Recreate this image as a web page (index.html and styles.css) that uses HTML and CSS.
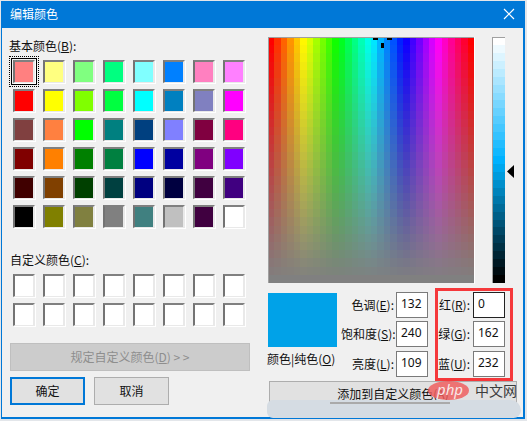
FILE: index.html
```
<!DOCTYPE html>
<html lang="zh">
<head>
<meta charset="utf-8">
<title>编辑颜色</title>
<link rel="stylesheet" href="styles.css">
</head>
<body>
<div class="window">
  <header class="titlebar">
    <span class="title">编辑颜色</span>
    <svg class="close" width="12" height="12" viewBox="0 0 12 12"><path d="M1 1 L11 11 M11 1 L1 11" stroke="#fff" stroke-width="1.2" fill="none"/></svg>
  </header>
  <div class="content">
    <section class="left">
      <div class="label label-basic">基本颜色(<u>B</u>):</div>
      <div class="swatches">
        <i class="swatch selected" style="background:#ff8080"></i><i class="swatch" style="background:#ffff80"></i><i class="swatch" style="background:#80ff80"></i><i class="swatch" style="background:#00ff80"></i><i class="swatch" style="background:#80ffff"></i><i class="swatch" style="background:#0080ff"></i><i class="swatch" style="background:#ff80c0"></i><i class="swatch" style="background:#ff80ff"></i>
        <i class="swatch" style="background:#ff0000"></i><i class="swatch" style="background:#ffff00"></i><i class="swatch" style="background:#80ff00"></i><i class="swatch" style="background:#00ff40"></i><i class="swatch" style="background:#00ffff"></i><i class="swatch" style="background:#0080c0"></i><i class="swatch" style="background:#8080c0"></i><i class="swatch" style="background:#ff00ff"></i>
        <i class="swatch" style="background:#804040"></i><i class="swatch" style="background:#ff8040"></i><i class="swatch" style="background:#00ff00"></i><i class="swatch" style="background:#008080"></i><i class="swatch" style="background:#004080"></i><i class="swatch" style="background:#8080ff"></i><i class="swatch" style="background:#800040"></i><i class="swatch" style="background:#ff0080"></i>
        <i class="swatch" style="background:#800000"></i><i class="swatch" style="background:#ff8000"></i><i class="swatch" style="background:#008000"></i><i class="swatch" style="background:#008040"></i><i class="swatch" style="background:#0000ff"></i><i class="swatch" style="background:#0000a0"></i><i class="swatch" style="background:#800080"></i><i class="swatch" style="background:#8000ff"></i>
        <i class="swatch" style="background:#400000"></i><i class="swatch" style="background:#804000"></i><i class="swatch" style="background:#004000"></i><i class="swatch" style="background:#004040"></i><i class="swatch" style="background:#000080"></i><i class="swatch" style="background:#000040"></i><i class="swatch" style="background:#400040"></i><i class="swatch" style="background:#400080"></i>
        <i class="swatch" style="background:#000000"></i><i class="swatch" style="background:#808000"></i><i class="swatch" style="background:#808040"></i><i class="swatch" style="background:#808080"></i><i class="swatch" style="background:#408080"></i><i class="swatch" style="background:#c0c0c0"></i><i class="swatch" style="background:#400040"></i><i class="swatch" style="background:#ffffff"></i>
      </div>
      <div class="label label-custom">自定义颜色(<u>C</u>):</div>
      <div class="swatches">
        <i class="swatch"></i><i class="swatch"></i><i class="swatch"></i><i class="swatch"></i><i class="swatch"></i><i class="swatch"></i><i class="swatch"></i><i class="swatch"></i>
        <i class="swatch"></i><i class="swatch"></i><i class="swatch"></i><i class="swatch"></i><i class="swatch"></i><i class="swatch"></i><i class="swatch"></i><i class="swatch"></i>
      </div>
      <div class="btn btn-define">规定自定义颜色(<u>D</u>)&nbsp;&gt;&nbsp;&gt;</div>
      <div class="actions">
        <div class="btn btn-ok">确定</div>
        <div class="btn btn-cancel">取消</div>
      </div>
    </section>
    <section class="right">
      <div class="pickers">
        <div class="spectrum">
          <canvas id="spectrum" width="206" height="246"></canvas>
          <b class="cross cross-l"></b><b class="cross cross-r"></b><b class="cross cross-v"></b>
        </div>
        <div class="lumbar"><canvas id="lum" width="13" height="246"></canvas></div>
        <svg class="arrow" width="8" height="13" viewBox="0 0 8 13"><path d="M0 6.5 L7 0 V13 Z" fill="#000"/></svg>
      </div>
      <div class="values">
        <div class="preview-col">
          <div class="preview"></div>
          <div class="preview-label">颜色|纯色(<u>O</u>)</div>
        </div>
        <div class="fields">
          <span class="flabel">色调(<u>E</u>):</span><span class="field">132</span><span class="flabel flabel-rgb">红(<u>R</u>):</span><span class="field field-active">0</span>
          <span class="flabel">饱和度(<u>S</u>):</span><span class="field">240</span><span class="flabel flabel-rgb">绿(<u>G</u>):</span><span class="field">162</span>
          <span class="flabel">亮度(<u>L</u>):</span><span class="field">109</span><span class="flabel flabel-rgb">蓝(<u>U</u>):</span><span class="field">232</span>
          <div class="highlight"></div>
        </div>
      </div>
      <div class="btn btn-add">添加到自定义颜色(<u>A</u>)</div>
    </section>
  </div>
</div>
<div class="veil"></div>
<div class="veil-line"></div>
<div class="watermark">
  <svg width="41" height="19" viewBox="0 0 41 19"><ellipse class="php-bg" cx="20.5" cy="9.5" rx="20.5" ry="9.5"/><text x="22" y="13.5" text-anchor="middle" class="php">php</text></svg>
  <span class="wm-text">中文网</span>
</div>
<script src="app.js"></script>
</body>
</html>
```
FILE: styles.css
```
* { box-sizing: border-box; }
html, body { margin: 0; padding: 0; }
body {
  width: 527px; height: 421px; overflow: hidden; position: relative;
  background: #e3e6ea;
  font-family: "Noto Sans CJK SC", "Noto Sans", sans-serif;
  font-size: 12px; color: #111;
  padding: 1px 0 0 1px;
}
.window {
  width: 524px; height: 418px;
  border: 1px solid #0078d7; border-bottom-width: 2px; border-right-width: 2px;
  background: #f0f0f0;
  display: flex; flex-direction: column;
}
.titlebar {
  height: 26px; flex: none; background: #0078d7; color: #fff;
  display: flex; align-items: center; justify-content: space-between;
  padding: 0 8px 3px 8px;
}
.title { font-size: 12px; line-height: 16px; }
.content { display: flex; flex: 1; padding-left: 8px; }
.left { width: 258px; flex: none; display: flex; flex-direction: column; }
.label { font-size: 12px; line-height: 16px; height: 16px; }
.label-basic { margin-top: 10px; margin-left: -1px; }
.label-custom { margin-top: 24px; margin-left: 0; }
u { text-underline-offset: 1px; }
.swatches {
  margin-top: 6px; margin-left: 3px;
  display: grid; grid-template-columns: repeat(8, 22px); column-gap: 8px;
  grid-auto-rows: 23px; row-gap: 6px;
}
.swatch {
  display: block; position: relative; background: #fff;
  border-style: solid; border-width: 2px 2px 1px 2px;
  border-color: #808080 #e9e9e9 #e9e9e9 #737373;
  box-shadow: 1px 1px 0 #fff;
}
.selected::before {
  content: ""; position: absolute; left: -4px; top: -4px; right: -4px; bottom: -3px;
  border: 1px solid #000;
}
.selected::after {
  content: ""; position: absolute; left: -6px; top: -6px; right: -6px; bottom: -5px;
  border: 1.5px dotted #000;
}
.btn {
  display: flex; align-items: center; justify-content: center;
  font-size: 12px; line-height: 16px; background: #e1e1e1; color: #111;
}
.btn-define {
  width: 240px; height: 28px; margin-top: 17px;
  background: #cccccc; color: #8e8e8e; border: 1px solid #bfbfbf;
}
.actions { display: flex; gap: 9px; margin-top: 6px; }
.btn-ok, .btn-cancel { width: 75px; height: 28px; }
.btn-ok { border: 2px solid #0078d7; }
.btn-cancel { border: 1px solid #adadad; }
.right { width: 254px; flex: none; margin-left: 0; padding-top: 9px; }
.pickers { display: flex; align-items: flex-start; height: 246px; }
.spectrum { position: relative; width: 207px; height: 247px; border-right: 1px solid #fff; }
canvas { display: block; }
.cross { position: absolute; background: #000; }
.cross-l { left: 105px; top: 1px; width: 5px; height: 2px; }
.cross-r { left: 119px; top: 1px; width: 5px; height: 2px; }
.cross-v { left: 113px; top: 6px; width: 3px; height: 5px; }
.lumbar { margin-left: 17px; width: 13px; height: 246px; }
.arrow { margin-left: 2px; margin-top: 128px; flex: none; }
.values { display: flex; margin-top: 9px; }
.preview-col { width: 69px; flex: none; }
.preview { height: 54px; width: 69px; margin-top: 1px; background: #00a2e8; }
.preview-label { font-size: 12px; line-height: 16px; margin-top: 4px; margin-left: -1px; white-space: nowrap; }
.fields {
  position: relative; flex: none; margin-left: 4px;
  display: grid; grid-template-columns: 55px 32px 45px 32px; grid-template-rows: 29px 30px 26px;
  align-items: start;
}
.flabel { text-align: right; padding-right: 2px; line-height: 26px; font-size: 12px; white-space: nowrap; }
.flabel-rgb { padding-right: 3px; }
.field {
  height: 26px; background: #fff; border: 1px solid #7a7a7a; padding-left: 4px;
  line-height: 22px; font-size: 12px; font-family: "Noto Sans", sans-serif;
}
.field-active { border-color: #222; }
.highlight {
  position: absolute; left: 94px; top: -4px; width: 78px; height: 93px;
  border: 3px solid #f5383b;
}
.btn-add { width: 248px; height: 28px; margin-top: 4px; margin-left: 1px; border: 1px solid #adadad; padding-bottom: 3px; }
.veil {
  position: absolute; left: 267px; top: 400px; width: 254px; height: 18px;
  background: #d5dce3; border-radius: 8px 14px 10px 8px;
}
.veil-line { position: absolute; left: 330px; top: 402px; width: 120px; height: 2px; background: #aaa; }
.watermark { position: absolute; left: 428px; top: 381px; display: flex; align-items: flex-start; gap: 6px; }
.watermark svg { display: block; }
.php-bg { fill: #ef5a5a; opacity: 0.82; }
.php { font-family: "Noto Sans", sans-serif; font-size: 15px; font-style: italic; fill: #f8e8e8; }
.wm-text { font-size: 14px; line-height: 18px; color: #3c3c3c; }
```
FILE: app.js
```
function hsl(h, s, l) {
  var c = (1 - Math.abs(2 * l - 1)) * s;
  var x = c * (1 - Math.abs((h * 6) % 2 - 1));
  var m = l - c / 2;
  var i = Math.floor(h * 6) % 6;
  var t = [[c, x, 0], [x, c, 0], [0, c, x], [0, x, c], [x, 0, c], [c, 0, x]][i];
  return "rgb(" + t.map(function (v) { return Math.round((v + m) * 255); }).join(",") + ")";
}
var sp = document.getElementById("spectrum").getContext("2d");
var cols = 32, rows = 30;
for (var i = 0; i < cols; i++) {
  for (var j = 0; j < rows; j++) {
    sp.fillStyle = hsl((i / (cols - 1)) % 1, 1 - j / (rows - 1), 0.5);
    var x0 = Math.round(i * 206 / cols), x1 = Math.round((i + 1) * 206 / cols);
    var y0 = Math.round(j * 246 / rows), y1 = Math.round((j + 1) * 246 / rows);
    sp.fillRect(x0, y0, x1 - x0, y1 - y0);
  }
}
sp.fillStyle = "#a0a0a0";
sp.fillRect(0, 0, 206, 1);
sp.fillRect(0, 0, 1, 246);
var lm = document.getElementById("lum").getContext("2d");
var steps = 31;
for (var k = 0; k < steps; k++) {
  lm.fillStyle = hsl(132 / 240, 1, 1 - k / (steps - 1));
  var a = Math.round(k * 246 / steps), b = Math.round((k + 1) * 246 / steps);
  lm.fillRect(0, a, 13, b - a);
}
lm.fillStyle = "#a0a0a0";
lm.fillRect(0, 0, 13, 1);
lm.fillRect(0, 0, 1, 246);
```
